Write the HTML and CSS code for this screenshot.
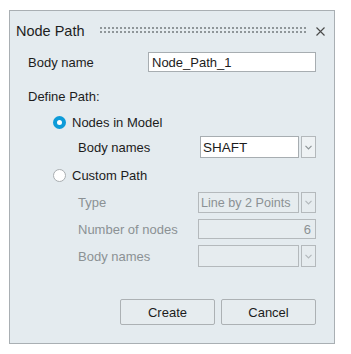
FILE: index.html
```html
<!DOCTYPE html>
<html>
<head>
<meta charset="utf-8">
<link rel="stylesheet" href="styles.css">
</head>
<body>
<div class="dialog">
  <div class="titlebar">
    <span class="title">Node Path</span>
    <span class="grip"></span>
    <svg class="close" width="9" height="9" viewBox="0 0 9 9"><path d="M0.5 0.5 L8.5 8.5 M8.5 0.5 L0.5 8.5" stroke="#4a4a4a" stroke-width="1.1" fill="none"/></svg>
  </div>
  <div class="content">
    <div class="row r-name">
      <span class="label">Body name</span>
      <div class="field wide">Node_Path_1</div>
    </div>
    <div class="section">Define Path:</div>
    <div class="radio-row r-nodes">
      <span class="radio on"></span><span>Nodes in Model</span>
    </div>
    <div class="sub r-shaft">
      <span class="label">Body names</span>
      <div class="combo focus">
        <div class="field focused">SHAFT</div>
        <div class="drop"><svg width="7" height="5" viewBox="0 0 7 5"><path d="M0.5 0.8 L3.5 3.8 L6.5 0.8" stroke="#8d9497" stroke-width="1.2" fill="none"/></svg></div>
      </div>
    </div>
    <div class="radio-row r-custom">
      <span class="radio"></span><span>Custom Path</span>
    </div>
    <div class="sub disabled r-type">
      <span class="label">Type</span>
      <div class="combo">
        <div class="field type">Line by 2 Points</div>
        <div class="drop"><svg width="7" height="5" viewBox="0 0 7 5"><path d="M0.5 0.8 L3.5 3.8 L6.5 0.8" stroke="#b3b9bc" stroke-width="1.2" fill="none"/></svg></div>
      </div>
    </div>
    <div class="sub disabled r-num">
      <span class="label">Number of nodes</span>
      <div class="field num">6</div>
    </div>
    <div class="sub disabled r-body2">
      <span class="label">Body names</span>
      <div class="combo">
        <div class="field"></div>
        <div class="drop"><svg width="7" height="5" viewBox="0 0 7 5"><path d="M0.5 0.8 L3.5 3.8 L6.5 0.8" stroke="#b3b9bc" stroke-width="1.2" fill="none"/></svg></div>
      </div>
    </div>
    <div class="buttons">
      <button class="btn">Create</button>
      <button class="btn">Cancel</button>
    </div>
  </div>
</div>
</body>
</html>
```
FILE: styles.css
```css
* { box-sizing: border-box; }
html, body { margin: 0; padding: 0; background: #ffffff; }
body {
  font-family: "Liberation Sans", Arial, sans-serif;
  font-size: 13px;
  color: #1c1c1c;
}
.dialog {
  margin: 10px 0 0 9px;
  width: 326px;
  height: 334px;
  border: 1px solid #a9afb3;
  background: #e4ebef;
}
.titlebar {
  height: 39px;
  display: flex;
  align-items: center;
  padding: 0 9px 0 6px;
}
.title {
  font-size: 14.5px;
  color: #1e1e1e;
}
.grip {
  flex: 1;
  height: 8px;
  margin: 1px 10px 0 15px;
  background-image: radial-gradient(circle at 1px 1px, #8f9699 0.8px, transparent 1.1px);
  background-size: 4px 4px;
}
.close { display: block; margin-top: 1px; }
.content {
  padding: 0 18px;
  display: flex;
  flex-direction: column;
}
.row, .sub {
  display: flex;
  align-items: center;
}
.label { width: 120px; flex: none; }
.sub { padding-left: 50px; }
.r-name { margin-top: 2px; height: 20px; }
.field {
  height: 100%;
  background: #ffffff;
  border: 1px solid #a7adb1;
  padding: 0 3px;
  display: flex;
  align-items: center;
  white-space: nowrap;
  overflow: hidden;
}
.field.wide { width: 168px; }
.section { margin-top: 17px; height: 16px; line-height: 16px; }
.radio-row {
  display: flex;
  align-items: center;
  padding-left: 25px;
  height: 16px;
}
.r-nodes { margin-top: 9px; }
.r-custom { margin-top: 9px; }
.radio {
  width: 13px;
  height: 13px;
  border-radius: 50%;
  border: 1px solid #a9aeb1;
  background: #ffffff;
  margin-right: 6px;
  flex: none;
}
.radio.on {
  border: 4px solid #0e9bd8;
  background: #ffffff;
}
.r-shaft { margin-top: 6px; height: 22px; }
.combo {
  width: 118px;
  height: 100%;
  display: flex;
  gap: 2px;
}
.combo .field { flex: 1; }
.combo.focus { padding-left: 2px; }
.field.focused {
  border: 1px dotted #222;
  outline: 1px solid #a7adb1;
  outline-offset: -1px;
  padding-left: 2px;
  font-size: 13.5px;
}
.field.type { padding-left: 2px; font-size: 12.6px; }
.drop {
  width: 15px;
  flex: none;
  border: 1px solid #b3b8bb;
  background: #eef2f4;
  display: flex;
  align-items: center;
  justify-content: center;
}
.r-type { margin-top: 9px; height: 21px; }
.r-num { margin-top: 6px; height: 20px; }
.r-body2 { margin-top: 6px; height: 22px; }
.disabled { color: #8b9194; }
.disabled .field {
  background: #e6ecef;
  border-color: #b4b9bc;
  color: #8b9194;
}
.disabled .drop {
  background: #e6ecef;
  border-color: #b4b9bc;
}
.field.num { width: 118px; justify-content: flex-end; padding-right: 4px; }
.buttons {
  margin-top: 32px;
  display: flex;
  justify-content: flex-end;
  gap: 6px;
}
.btn {
  width: 95px;
  height: 26px;
  border: 1px solid #acb1b4;
  border-radius: 2px;
  background: #e6ecef;
  font-family: "Liberation Sans", Arial, sans-serif;
  font-size: 13px;
  color: #1c1c1c;
  padding: 0;
}
```
